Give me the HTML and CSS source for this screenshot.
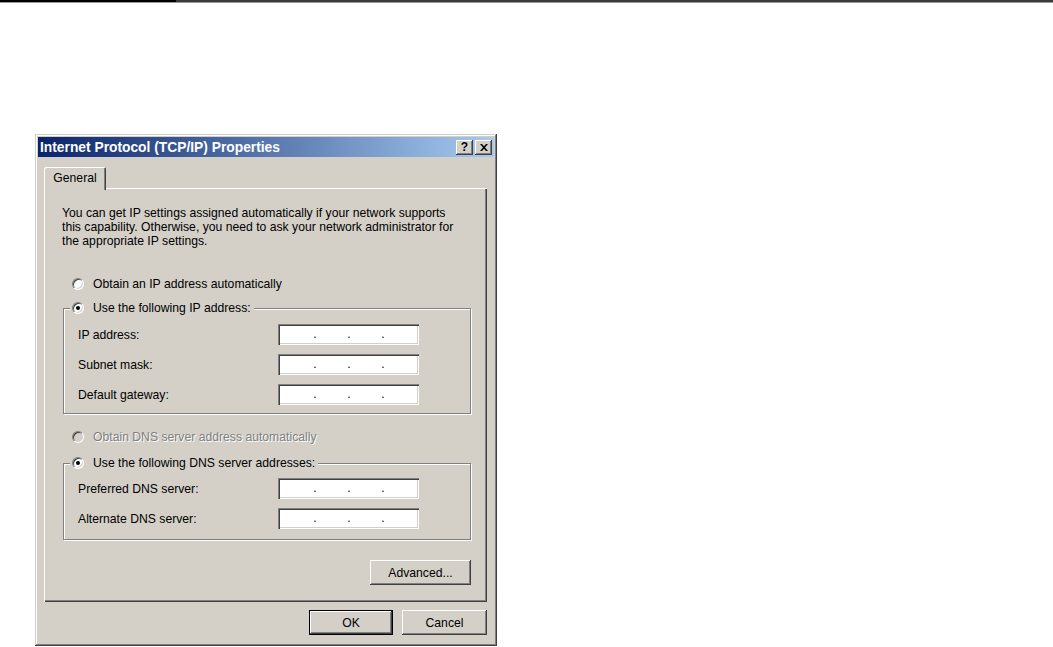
FILE: index.html
```html
<!DOCTYPE html>
<html>
<head>
<meta charset="utf-8">
<title>Internet Protocol (TCP/IP) Properties</title>
<link rel="stylesheet" href="styles.css">
</head>
<body>
<div class="topline"><div class="seg-a"></div><div class="seg-b"></div></div>
<div class="dialog">
  <div class="titlebar">
    <span class="title">Internet Protocol (TCP/IP) Properties</span>
    <div class="tbtns">
      <span class="tbtn help">?</span>
      <span class="tbtn close"><svg width="8" height="7" viewBox="0 0 8 7"><path d="M0 0h2l2 2.2L6 0h2L5 3.5 8 7H6L4 4.8 2 7H0l3-3.5z" fill="#000"/></svg></span>
    </div>
  </div>
  <div class="tabs"><div class="tab">General</div></div>
  <div class="panel">
    <p class="intro">You can get IP settings assigned automatically if your network supports<br>this capability. Otherwise, you need to ask your network administrator for<br>the appropriate IP settings.</p>
    <div class="opt"><span class="radio"></span><span>Obtain an IP address automatically</span></div>
    <fieldset class="group">
      <legend><span class="radio checked"></span><span>Use the following IP address:</span></legend>
      <div class="row first"><span class="lbl">IP address:</span><div class="ip"><i>.</i><i>.</i><i>.</i></div></div>
      <div class="row"><span class="lbl">Subnet mask:</span><div class="ip"><i>.</i><i>.</i><i>.</i></div></div>
      <div class="row"><span class="lbl">Default gateway:</span><div class="ip"><i>.</i><i>.</i><i>.</i></div></div>
    </fieldset>
    <div class="opt dns disabled"><span class="radio off"></span><span>Obtain DNS server address automatically</span></div>
    <fieldset class="group group2">
      <legend><span class="radio checked"></span><span>Use the following DNS server addresses:</span></legend>
      <div class="row first"><span class="lbl">Preferred DNS server:</span><div class="ip"><i>.</i><i>.</i><i>.</i></div></div>
      <div class="row"><span class="lbl">Alternate DNS server:</span><div class="ip"><i>.</i><i>.</i><i>.</i></div></div>
    </fieldset>
    <div class="adv-row"><button class="btn adv">Advanced...</button></div>
  </div>
  <div class="footer">
    <button class="btn ok">OK</button>
    <button class="btn cancel">Cancel</button>
  </div>
</div>
</body>
</html>
```

FILE: styles.css
```css
html, body {
  margin: 0;
  padding: 0;
  background: #ffffff;
}
body {
  font-family: "Liberation Sans", Arial, sans-serif;
  font-size: 12.2px;
  color: #000;
}
.topline {
  display: flex;
  height: 3px;
}
.seg-a {
  width: 176px;
  background: #000;
  border-bottom: 1px solid #9a9a9a;
}
.seg-b {
  flex: 1;
  background: #3a3a3a;
  border-bottom: 1px solid #9a9a9a;
}
.dialog {
  box-sizing: border-box;
  width: 462px;
  margin: 131px 0 0 35px;
  padding: 3px;
  background: #d4d0c8;
  box-shadow: inset -1px -1px #404040, inset 1px 1px #d4d0c8, inset -2px -2px #808080, inset 2px 2px #ffffff;
}
.titlebar {
  height: 20px;
  display: flex;
  align-items: center;
  justify-content: space-between;
  padding: 0 2px 0 2px;
  background: linear-gradient(to right, #0a246a, #a6caf0);
  color: #fff;
}
.title {
  font-weight: bold;
  font-size: 13.8px;
  white-space: nowrap;
}
.tbtns {
  display: flex;
  gap: 2px;
}
.tbtn {
  box-sizing: border-box;
  width: 17px;
  height: 15px;
  background: #d4d0c8;
  display: flex;
  align-items: center;
  justify-content: center;
  color: #000;
  font-weight: bold;
  font-size: 12px;
  box-shadow: inset -1px -1px #404040, inset 1px 1px #ffffff, inset -2px -2px #808080;
}
.tbtn.help {
  padding-bottom: 1px;
}
.tabs {
  display: flex;
  margin-top: 10px;
  padding-left: 6px;
}
.tab {
  position: relative;
  z-index: 1;
  box-sizing: border-box;
  width: 62px;
  height: 23px;
  margin-bottom: -2px;
  padding-top: 4px;
  text-align: center;
  background: #d4d0c8;
  border-radius: 2px 2px 0 0;
  box-shadow: inset 1px 1px #ffffff, inset -1px 0 #404040, inset -2px 0 #808080;
}
.panel {
  margin: 0 7px 0 6px;
  padding: 18px 16px 17px 18px;
  box-shadow: inset 1px 1px #ffffff, inset -1px -1px #404040, inset -2px -2px #808080;
}
.intro {
  margin: 0;
  line-height: 14px;
  white-space: nowrap;
}
.opt {
  display: flex;
  align-items: center;
  gap: 9px;
  height: 14px;
  margin-top: 29px;
  padding-left: 10px;
  white-space: nowrap;
}
.opt.dns {
  margin-top: 16px;
}
.disabled {
  color: #808080;
  text-shadow: 1px 1px #ffffff;
}
.radio {
  box-sizing: border-box;
  position: relative;
  flex: none;
  width: 12px;
  height: 12px;
  border-radius: 50%;
  background: #ffffff;
  border: 1px solid;
  border-color: #808080 #ffffff #ffffff #808080;
  box-shadow: inset 1px 1px #404040, inset -1px -1px #d4d0c8;
}
.radio.off {
  background: #d4d0c8;
}
.radio.checked::after {
  content: "";
  position: absolute;
  left: 3px;
  top: 3px;
  width: 4px;
  height: 4px;
  border-radius: 50%;
  background: #000;
}
.group {
  margin: 10px 0 0 1px;
  padding: 0 0 8px 0;
  min-width: 0;
  border: 1px solid #808080;
  box-shadow: inset 1px 1px #ffffff, 1px 1px #ffffff;
}
.group2 {
  margin-top: 12px;
  padding-bottom: 10px;
}
.group legend {
  display: flex;
  align-items: center;
  gap: 9px;
  height: 14px;
  margin-left: 6px;
  padding: 0 3px 0 2px;
  background: #d4d0c8;
  white-space: nowrap;
}
.row {
  display: flex;
  align-items: center;
  height: 21px;
  margin-top: 9px;
  padding-left: 14px;
}
.group2 .row.first {
  margin-top: 8px;
}
.lbl {
  width: 200px;
  white-space: nowrap;
}
.ip {
  box-sizing: border-box;
  width: 141px;
  height: 21px;
  display: flex;
  align-items: center;
  gap: 30px;
  padding-left: 35px;
  background: #ffffff;
  box-shadow: inset 1px 1px #808080, inset 2px 2px #404040, inset -1px -1px #ffffff, inset -2px -2px #d4d0c8;
}
.ip i {
  font-style: normal;
  width: 4px;
  text-align: center;
  line-height: 21px;
}
.adv-row {
  display: flex;
  justify-content: flex-end;
  margin-top: 20px;
}
.btn {
  box-sizing: border-box;
  height: 25px;
  margin: 0;
  padding: 0;
  border: none;
  background: #d4d0c8;
  font-family: "Liberation Sans", Arial, sans-serif;
  font-size: 12.2px;
  color: #000;
  box-shadow: inset -1px -1px #404040, inset 1px 1px #ffffff, inset -2px -2px #808080, inset 2px 2px #d4d0c8;
}
.adv {
  width: 101px;
}
.footer {
  display: flex;
  justify-content: flex-end;
  gap: 9px;
  margin: 8px 7px 0 0;
  padding-bottom: 8px;
}
.ok {
  width: 84px;
  border: 1px solid #000;
  box-shadow: inset -1px -1px #404040, inset 1px 1px #ffffff, inset -2px -2px #808080;
}
.cancel {
  width: 85px;
}
```
